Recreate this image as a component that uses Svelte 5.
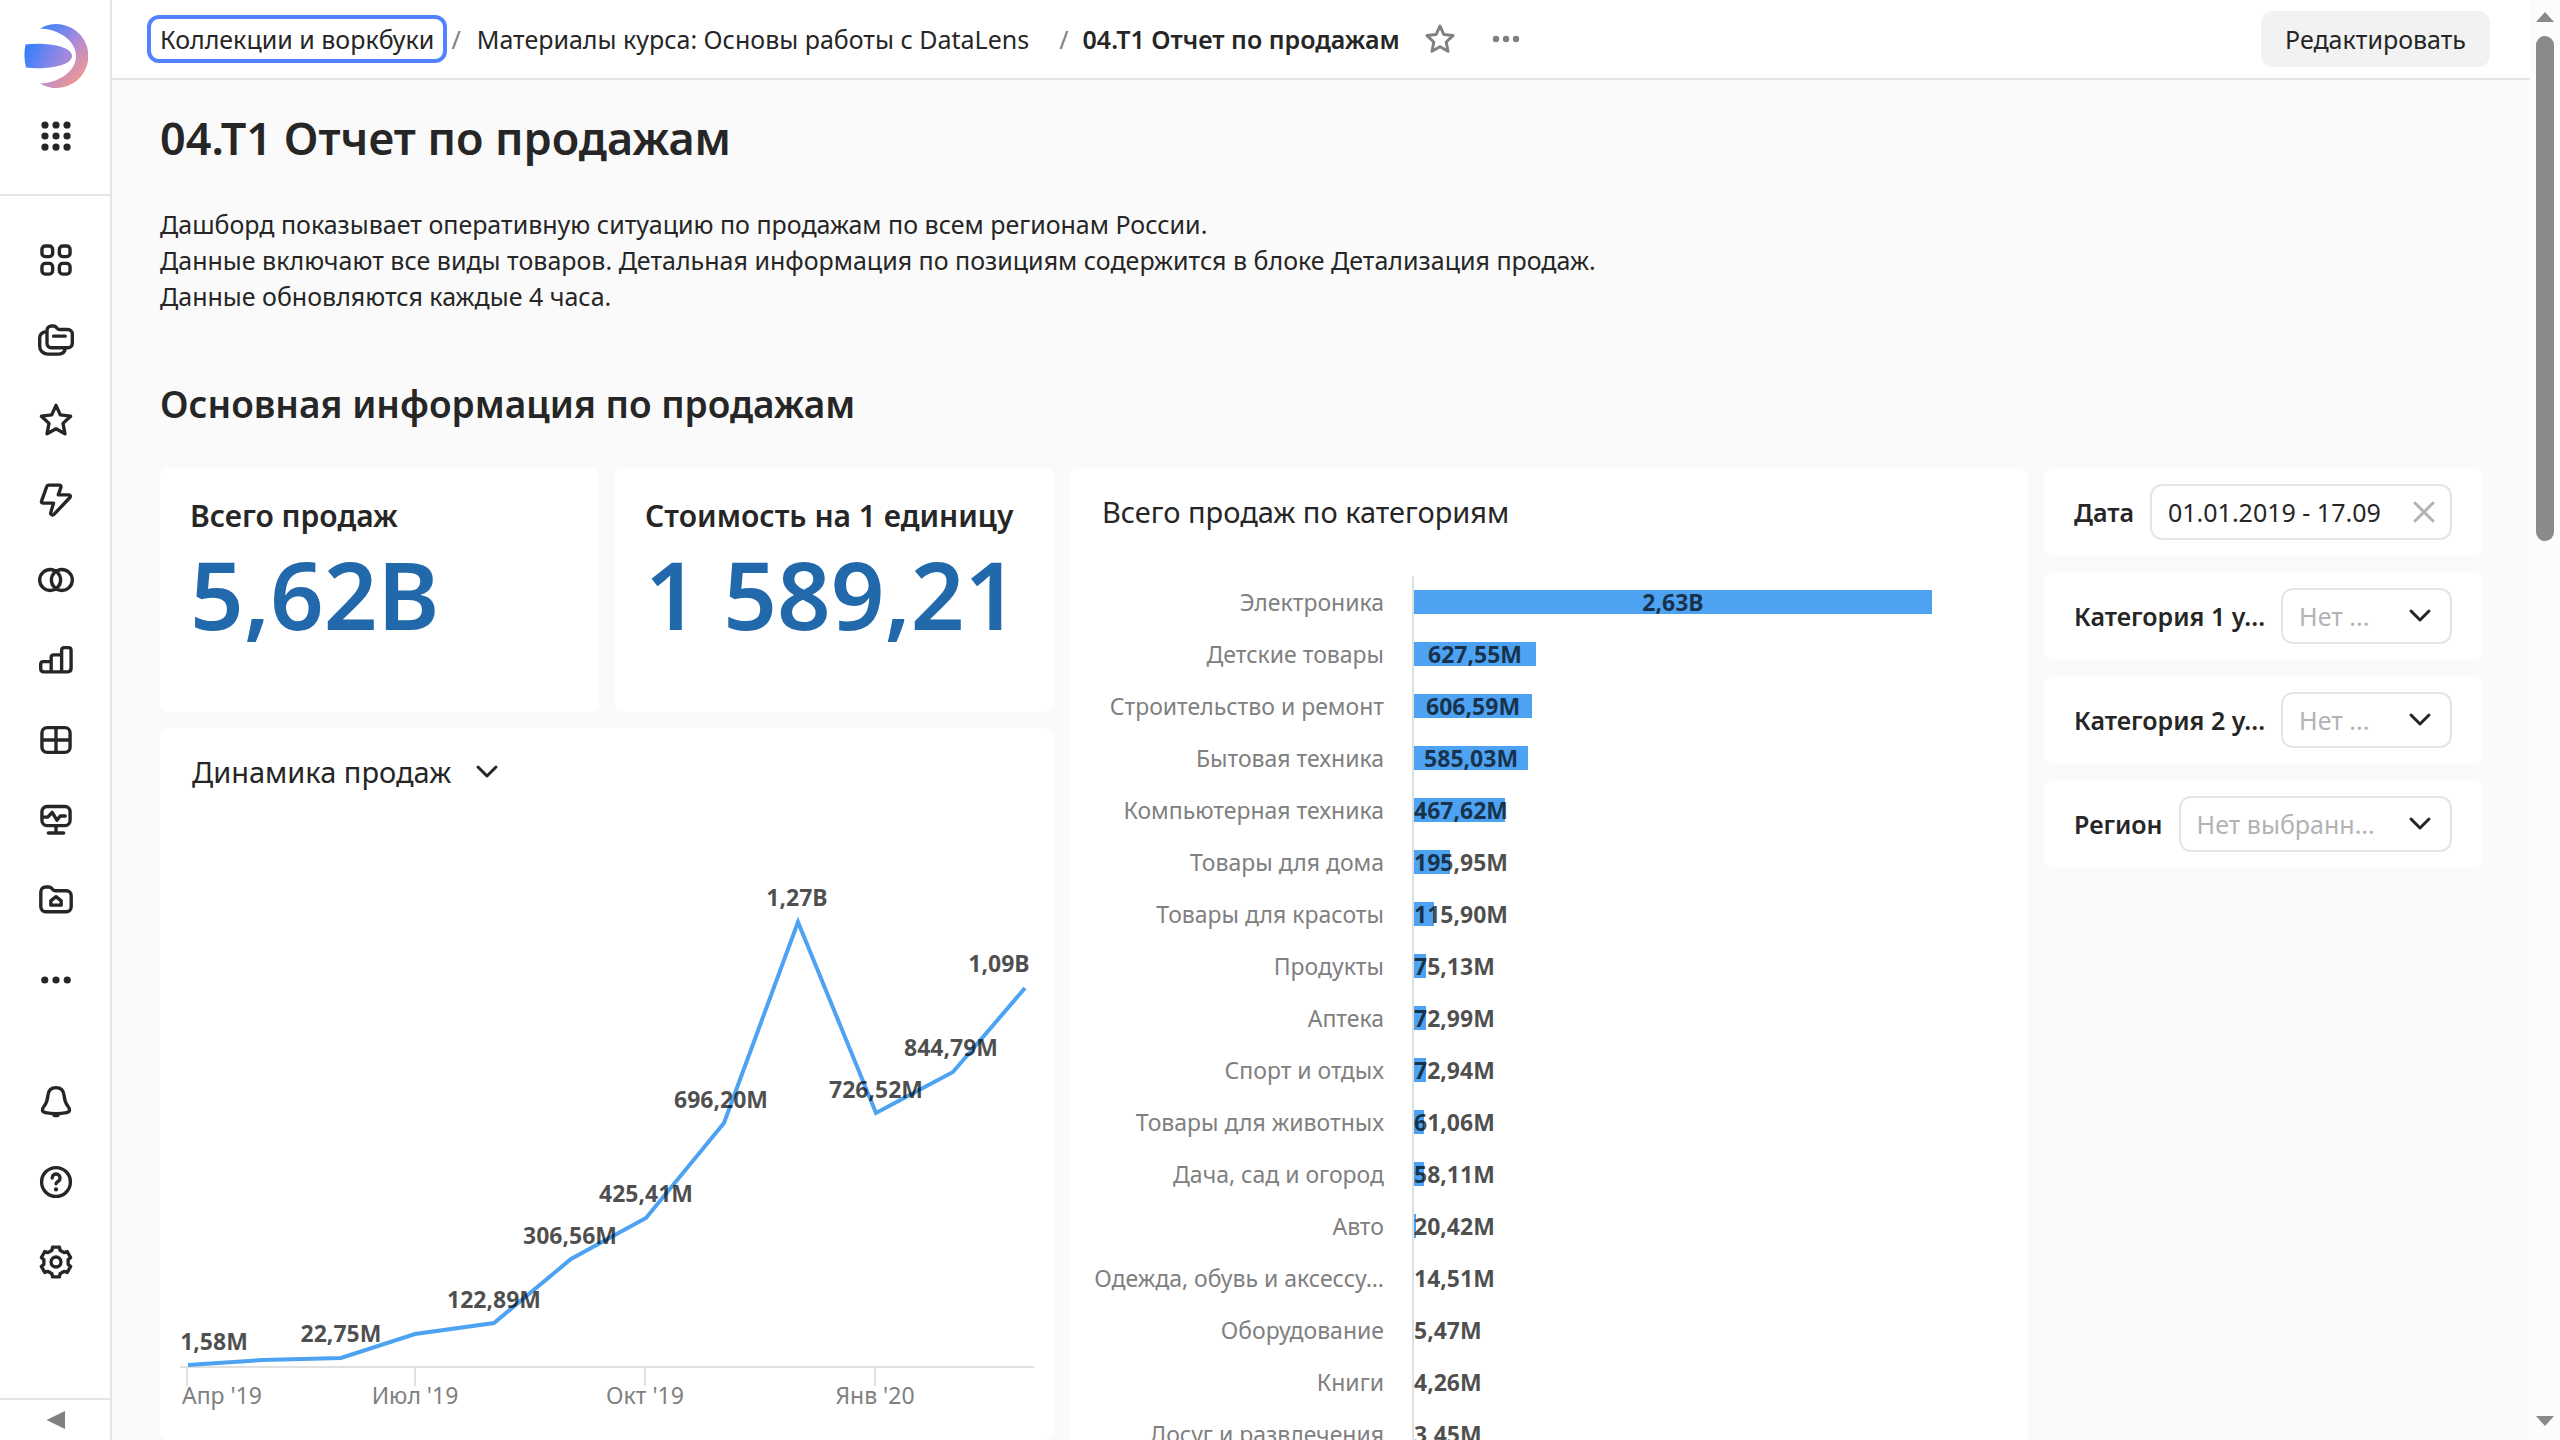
<script>
  const ring = (n, fn) => Array.from({ length: n }, (_, i) => fn(i));
  const polar = (deg, r) => {
    const a = ((deg - 90) * Math.PI) / 180;
    return `${(8 + r * Math.cos(a)).toFixed(2)} ${(8 + r * Math.sin(a)).toFixed(2)}`;
  };
  const gear =
    'M' +
    ring(6, (i) => {
      const d = i * 60;
      return [
        polar(d - 13, 6.8),
        polar(d + 13, 6.8),
        polar(d + 19, 5.5),
        polar(d + 41, 5.5),
      ].join('L');
    }).join('L') +
    'Z';

  const star =
    'M8 1.5 9.9 5.7 14.5 6.3 11.1 9.5 12 14.1 8 11.9 4 14.1 4.9 9.5 1.5 6.3 6.1 5.7Z';

  const nav = [
    { name: 'Дашборды', d: 'M3.25 1.75h1.75a1.5 1.5 0 0 1 1.5 1.5v1.75a1.5 1.5 0 0 1-1.5 1.5h-1.75a1.5 1.5 0 0 1-1.5-1.5v-1.75a1.5 1.5 0 0 1 1.5-1.5zM11 1.75h1.75a1.5 1.5 0 0 1 1.5 1.5v1.75a1.5 1.5 0 0 1-1.5 1.5H11a1.5 1.5 0 0 1-1.5-1.5v-1.75a1.5 1.5 0 0 1 1.5-1.5zM3.25 9.5h1.75a1.5 1.5 0 0 1 1.5 1.5v1.75a1.5 1.5 0 0 1-1.5 1.5h-1.75a1.5 1.5 0 0 1-1.5-1.5v-1.75a1.5 1.5 0 0 1 1.5-1.5zM11 9.5h1.75a1.5 1.5 0 0 1 1.5 1.5v1.75a1.5 1.5 0 0 1-1.5 1.5H11a1.5 1.5 0 0 1-1.5-1.5v-1.75a1.5 1.5 0 0 1 1.5-1.5z' },
    { name: 'Коллекции', d: 'M4 3.75a2 2 0 0 1 2-2h.9c.5 0 1 .25 1.3.65l.25.35c.3.4.75.6 1.25.6h3.55a2 2 0 0 1 2 2v4.1a2 2 0 0 1-2 2H6a2 2 0 0 1-2-2zM6.9 6.3h5.2M3.8 4.3C1.9 4.5.75 5.5.75 7.25v3.5a3.5 3.5 0 0 0 3.5 3.5h5c1.6 0 2.6-.9 2.9-2.4' },
    { name: 'Избранное', d: star },
    { name: 'Подключения', d: 'M4.7 1.4h4.8a.7.7 0 0 1 .7.9L9 5.7h4.7c.7 0 .9.7.5 1.2L7.2 14.3c-.7.7-1.8.2-1.5-.8L6.9 9.4H2.3c-.6 0-.9-.5-.7-1L3.9 2c.1-.4.4-.6.8-.6z' },
    { name: 'Датасеты', d: 'M.75 8a4.65 4.65 0 1 0 9.3 0a4.65 4.65 0 1 0-9.3 0zM5.95 8a4.65 4.65 0 1 0 9.3 0a4.65 4.65 0 1 0-9.3 0z' },
    { name: 'Чарты', d: 'M10.5 13.25V3.7c0-.7.5-1.2 1.2-1.2h1.8c.7 0 1.2.5 1.2 1.2v8c0 .9-.6 1.55-1.5 1.55H2.7c-.9 0-1.5-.6-1.5-1.5V9.9c0-.7.5-1.2 1.2-1.2h3.2M5.85 13.25V6.9c0-.7.5-1.2 1.2-1.2h3.2' },
    { name: 'Таблицы', d: 'M4 2.5h8a2.25 2.25 0 0 1 2.25 2.25v6.5A2.25 2.25 0 0 1 12 13.5H4a2.25 2.25 0 0 1-2.25-2.25v-6.5A2.25 2.25 0 0 1 4 2.5zM8 2.5v11M1.75 8h12.5' },
    { name: 'Мониторинг', d: 'M4 2h8a2.25 2.25 0 0 1 2.25 2.25v4A2.25 2.25 0 0 1 12 10.5H4a2.25 2.25 0 0 1-2.25-2.25v-4A2.25 2.25 0 0 1 4 2zM8 10.5v3.3M4.6 13.8h6.8M1.9 6.7h2.4l2-2.1 2.1 3.5 1.5-1.9h2.2' },
    { name: 'Моя папка', d: 'M1.25 4.4c0-1.3.9-2.2 2.2-2.2h1.2c.6 0 1.2.3 1.6.8l.3.3c.3.4.7.6 1.2.6h4.8c1.3 0 2.2.9 2.2 2.2v4.9c0 1.3-.9 2.2-2.2 2.2h-9.1c-1.3 0-2.2-.9-2.2-2.2zM5.7 8.4 8 6.5l2.3 1.9v1.9H5.7z' },
  ];

  const apps = ring(9, (i) => ({ x: 3.1 + (i % 3) * 4.9, y: 3.1 + Math.floor(i / 3) * 4.9 }));

  const series = [
    [28, 545], [103, 540], [181, 538], [255, 514], [334, 503], [411, 439],
    [486, 398], [564, 303], [638, 102], [716, 293], [793, 252], [865, 168],
  ];
  const line = series.map((p) => p.join(',')).join(' ');
  const marks = [
    { x: 54, y: 530, t: '1,58M' }, { x: 181, y: 522, t: '22,75M' },
    { x: 334, y: 488, t: '122,89M' }, { x: 410, y: 424, t: '306,56M' },
    { x: 486, y: 382, t: '425,41M' }, { x: 561, y: 288, t: '696,20M' },
    { x: 637, y: 86, t: '1,27B' }, { x: 716, y: 278, t: '726,52M' },
    { x: 791, y: 236, t: '844,79M' }, { x: 839, y: 152, t: '1,09B' },
  ];
  const ticks = [
    { x: 27, tx: 62, t: "Апр '19" }, { x: 255, tx: 255, t: "Июл '19" },
    { x: 485, tx: 485, t: "Окт '19" }, { x: 715, tx: 715, t: "Янв '20" },
  ];

  const top = 2630;
  const bars = [
    ['Электроника', '2,63B', 2630], ['Детские товары', '627,55M', 620],
    ['Строительство и ремонт', '606,59M', 600], ['Бытовая техника', '585,03M', 580],
    ['Компьютерная техника', '467,62M', 460], ['Товары для дома', '195,95M', 184],
    ['Товары для красоты', '115,90M', 102], ['Продукты', '75,13M', 60],
    ['Аптека', '72,99M', 60], ['Спорт и отдых', '72,94M', 60],
    ['Товары для животных', '61,06M', 51], ['Дача, сад и огород', '58,11M', 51],
    ['Авто', '20,42M', 10], ['Одежда, обувь и аксессу…', '14,51M', 0],
    ['Оборудование', '5,47M', 0], ['Книги', '4,26M', 0],
    ['Досуг и развлечения', '3,45M', 0],
  ];

  const filters = [
    { id: 'cat1', label: 'Категория 1 у...', value: 'Нет ...' },
    { id: 'cat2', label: 'Категория 2 у...', value: 'Нет ...' },
    { id: 'region', label: 'Регион', value: 'Нет выбранн...' },
  ];
</script>

{#snippet icon(d)}
  <svg class="icon" viewBox="0 0 16 16" aria-hidden="true"><path {d} /></svg>
{/snippet}

{#snippet dots()}
  <svg class="icon dots" viewBox="0 0 16 16" aria-hidden="true">
    <circle cx="3" cy="8" r="1.6" /><circle cx="8" cy="8" r="1.6" /><circle cx="13" cy="8" r="1.6" />
  </svg>
{/snippet}

<div class="app">
  <aside class="side">
    <div class="brand">
      <a href="#home" aria-label="DataLens">
        <svg class="logo" viewBox="24 24 64 64" aria-hidden="true">
          <defs>
            <linearGradient id="brand" gradientUnits="userSpaceOnUse" x1="30" y1="32" x2="82" y2="82">
              <stop offset="0" stop-color="#3d82f7" />
              <stop offset="0.25" stop-color="#5f85f0" />
              <stop offset="0.55" stop-color="#b08ad6" />
              <stop offset="1" stop-color="#f69a88" />
            </linearGradient>
            <linearGradient id="beam" gradientUnits="userSpaceOnUse" x1="26" y1="46" x2="72" y2="66">
              <stop offset="0" stop-color="#2f80fb" />
              <stop offset="0.5" stop-color="#7a84ec" />
              <stop offset="1" stop-color="#b98bd2" />
            </linearGradient>
          </defs>
          <path fill="url(#brand)" d="M40 28.5A32 32 0 1 1 40 83.500C60 82.500 76 71 76 56S60 29.500 40 28.500z" />
          <path fill="url(#beam)" d="M25.500 44.500C45 42 72 46 72 56S45 70 26 67.500C24 60 24 52 25.500 44.500z" />
        </svg>
      </a>
      <button class="navbtn" aria-label="Сервисы">
        <svg class="icon dots" viewBox="0 0 16 16" aria-hidden="true">
          {#each apps as a}<circle cx={a.x} cy={a.y} r="1.6" />{/each}
        </svg>
      </button>
    </div>
    <nav>
      {#each nav as n}
        <button class="navbtn" aria-label={n.name}>{@render icon(n.d)}</button>
      {/each}
      <button class="navbtn" aria-label="Ещё">{@render dots()}</button>
    </nav>
    <div class="tools">
      <button class="navbtn" aria-label="Уведомления">
        <svg class="icon" viewBox="0 0 16 16" aria-hidden="true">
          <path d="M8 1.6C5.7 1.6 4.6 3.2 4.4 5.1 4.2 7 3.9 8.4 2.7 9.9 1.5 11.3 1.8 12.4 3.3 12.7c3 .6 6.4 .6 9.4 0 1.5-.3 1.8-1.4 .6-2.8C12.1 8.4 11.8 7 11.6 5.1 11.4 3.2 10.3 1.6 8 1.6z" />
          <path class="solid" d="M6.2 13.3h3.6a1.8 1.5 0 0 1-3.6 0z" />
        </svg>
      </button>
      <button class="navbtn" aria-label="Помощь">
        <svg class="icon" viewBox="0 0 16 16" aria-hidden="true">
          <circle cx="8" cy="8" r="6.4" />
          <path d="M6.3 6.2a1.75 1.75 0 1 1 2.7 1.45c-.7.45-1 .7-1 1.15" />
          <circle class="solid" cx="8" cy="11.3" r=".95" />
        </svg>
      </button>
      <button class="navbtn" aria-label="Настройки">
        <svg class="icon" viewBox="0 0 16 16" aria-hidden="true">
          <path d={gear} /><circle cx="8" cy="8" r="2.2" />
        </svg>
      </button>
    </div>
    <button class="collapse" aria-label="Свернуть">
      <svg viewBox="0 0 20 20" aria-hidden="true"><path d="M0.5 10 19 1v18z" /></svg>
    </button>
  </aside>

  <div class="page">
    <header>
      <nav class="crumbs" aria-label="Навигация">
        <a class="focused" href="#collections">Коллекции и воркбуки</a>
        <span class="slash">/</span>
        <a href="#workbook">Материалы курса: Основы работы с DataLens</a>
        <span class="slash wide">/</span>
        <a class="current" href="#report" aria-current="page">04.T1 Отчет по продажам</a>
      </nav>
      <button class="tool" aria-label="В избранное">{@render icon(star)}</button>
      <button class="tool" aria-label="Меню">{@render dots()}</button>
      <button class="edit">Редактировать</button>
    </header>

    <main>
      <h1>04.T1 Отчет по продажам</h1>
      <p>
        Дашборд показывает оперативную ситуацию по продажам по всем регионам России.<br />
        Данные включают все виды товаров. Детальная информация по позициям содержится в блоке Детализация продаж.<br />
        Данные обновляются каждые 4 часа.
      </p>
      <h2>Основная информация по продажам</h2>

      <div class="board">
        <div class="left">
          <section class="card kpi"><h3>Всего продаж</h3><strong>5,62B</strong></section>
          <section class="card kpi"><h3>Стоимость на 1 единицу</h3><strong>1 589,21</strong></section>
          <section class="card trend">
            <button class="pick">
              Динамика продаж
              <svg class="chev" viewBox="0 0 24 24" aria-hidden="true"><path d="M3 7l9 9 9-9" /></svg>
            </button>
            <svg class="plot" viewBox="0 0 894 600" role="img" aria-label="Динамика продаж">
              <path class="axis" d="M20 547H874" />
              {#each ticks as k}
                <path class="axis" d="M{k.x} 547v19" />
                <text class="tick" x={k.tx} y="584">{k.t}</text>
              {/each}
              <polyline points={line} />
              {#each marks as m}<text class="mark" x={m.x} y={m.y}>{m.t}</text>{/each}
            </svg>
          </section>
        </div>

        <section class="card cats">
          <h3>Всего продаж по категориям</h3>
          <div class="rows">
            {#each bars as [name, text, v]}
              <div class="row">
                <span class="name">{name}</span>
                <div class="track">
                  <div class="bar" style:width="{(v / top) * 100}%"><span>{text}</span></div>
                </div>
              </div>
            {/each}
          </div>
        </section>

        <div class="filters">
          <div class="card filter">
            <label for="date">Дата</label>
            <div class="field date">
              <input id="date" type="text" value="01.01.2019 - 17.09" />
              <button class="clear" aria-label="Очистить">
                <svg class="chev" viewBox="0 0 24 24" aria-hidden="true"><path d="M3 3l18 18M21 3 3 21" /></svg>
              </button>
            </div>
          </div>
          {#each filters as f}
            <div class="card filter">
              <label for={f.id}>{f.label}</label>
              <div class="field">
                <select id={f.id}><option>{f.value}</option></select>
                <svg class="chev" viewBox="0 0 24 24" aria-hidden="true"><path d="M3 7l9 9 9-9" /></svg>
              </div>
            </div>
          {/each}
        </div>
      </div>
    </main>
  </div>

  <div class="scroll" aria-hidden="true">
    <svg viewBox="0 0 18 10"><path d="M0 10 9 0l9 10z" /></svg>
    <div class="rail"><div class="thumb"></div></div>
    <svg viewBox="0 0 18 10"><path d="M0 0l9 10 9-10z" /></svg>
  </div>
</div>

<style>
  :global(body) { margin: 0; }
  .app {
    display: grid;
    grid-template-columns: 112px minmax(0, 1fr) 30px;
    height: 100vh;
    overflow: hidden;
    background: #fafafa;
    color: #262626;
    font: 25px/36px "Noto Sans", "Open Sans", sans-serif;
  }
  .app * { box-sizing: border-box; }
  button { font: inherit; color: inherit; background: none; border: 0; padding: 0; margin: 0; cursor: pointer; }
  a { color: inherit; text-decoration: none; }
  h1, h2, h3, p { margin: 0; }
  h1, h2, h3 { font-weight: 600; }

  .side { display: flex; flex-direction: column; background: #fff; box-shadow: inset -2px 0 #e5e5e5; min-height: 0; }
  .brand { display: flex; flex-direction: column; align-items: center; height: 196px; padding-top: 24px; border-bottom: 2px solid #e5e5e5; }
  .brand a { height: 64px; }
  .logo { width: 64px; height: 64px; display: block; }
  .brand .navbtn { height: 96px; }
  .side nav { padding-top: 24px; }
  .navbtn { display: flex; align-items: center; justify-content: center; width: 100%; height: 80px; flex: none; }
  .icon { width: 36px; height: 36px; fill: none; stroke: currentColor; stroke-width: 1.5; stroke-linecap: round; stroke-linejoin: round; }
  .dots { fill: currentColor; stroke: none; }
  .solid { fill: currentColor; stroke: none; }
  .tools { margin-top: auto; padding-bottom: 96px; }
  .collapse { display: flex; justify-content: center; align-items: center; height: 42px; border-top: 2px solid #e5e5e5; color: #808080; }
  .collapse svg { width: 20px; height: 20px; fill: currentColor; }

  .page { display: flex; flex-direction: column; min-width: 0; min-height: 0; }
  header { display: flex; align-items: center; flex: none; height: 80px; padding: 0 40px 0 35px; background: #fff; border-bottom: 2px solid #e5e5e5; }
  .crumbs { display: flex; align-items: center; white-space: nowrap; }
  .focused { padding: 2px 9px; border: 4px solid #5282ff; border-radius: 12px; }
  .slash { color: #808080; padding: 0 16px 0 4px; }
  .slash.wide { padding: 0 14px 0 30px; }
  .current { font-weight: 600; }
  .tool { display: flex; margin-left: 24px; color: #808080; }
  .tool .icon { width: 32px; height: 32px; }
  .tool + .tool { margin-left: 34px; }
  .edit { margin-left: auto; height: 56px; padding: 0 24px; border-radius: 12px; background: #f2f2f2; }

  main { padding: 26px 48px 0; min-height: 0; overflow: hidden; }
  h1 { font-size: 45px; line-height: 64px; }
  main p { padding-top: 36px; }
  h2 { font-size: 37px; line-height: 48px; padding: 66px 0 40px; }

  .board { display: grid; grid-template-columns: minmax(0, 894fr) minmax(0, 958fr) minmax(0, 438fr); gap: 16px; align-items: start; }
  .left { display: grid; grid-template-columns: repeat(2, minmax(0, 1fr)); gap: 16px; }
  .card { background: #fff; border-radius: 8px; }
  .kpi { min-height: 244px; padding: 28px 30px; white-space: nowrap; }
  .kpi h3 { font-size: 30px; line-height: 40px; }
  .kpi strong { display: block; font-size: 94px; line-height: 116px; font-weight: 600; color: #2169ab; }
  .trend { grid-column: span 2; padding-bottom: 20px; }
  .pick { display: flex; align-items: center; gap: 24px; height: 92px; padding: 0 32px 4px; font-size: 29px; }
  .chev { width: 24px; height: 24px; flex: none; fill: none; stroke: currentColor; stroke-width: 3; stroke-linecap: round; stroke-linejoin: round; }
  .plot { display: block; width: 100%; }
  .axis { stroke: #e0e0e0; stroke-width: 2; }
  .plot polyline { fill: none; stroke: #4da2f1; stroke-width: 4; }
  .plot text { font-size: 23px; text-anchor: middle; }
  .tick { fill: #808080; }
  .mark { fill: rgb(0 0 0 / 0.7); font-weight: 700; }

  .cats { padding: 24px 20px 32px; }
  .cats h3 { font-size: 29px; line-height: 40px; font-weight: 400; padding: 0 12px 44px; }
  .rows { display: grid; font-size: 23px; }
  .row { display: grid; grid-template-columns: 294px minmax(0, 1fr); gap: 28px; height: 52px; }
  .name { align-self: center; text-align: right; color: #808080; white-space: nowrap; }
  .track { display: flex; align-items: center; border-left: 2px solid #e0e0e0; padding-right: 76px; }
  .bar { height: 24px; background: #4da2f1; line-height: 24px; white-space: nowrap; }
  .bar span { display: block; width: max-content; min-width: 100%; text-align: center; font-weight: 700; color: rgb(0 0 0 / 0.7); }

  .filters { display: grid; gap: 16px; }
  .filter { display: flex; align-items: center; gap: 16px; height: 88px; padding: 0 30px; }
  .filter label { flex: none; max-width: 51%; overflow: hidden; white-space: nowrap; font-weight: 600; }
  .field { display: flex; align-items: center; flex: 1; min-width: 0; height: 56px; padding: 0 18px 0 16px; border: 2px solid #e5e5e5; border-radius: 12px; }
  .field.date { padding-right: 14px; }
  .field input, .field select { flex: 1; min-width: 0; width: 0; height: 36px; padding: 0; border: 0; outline: 0; background: none; font: inherit; color: inherit; appearance: none; }
  .field select { color: #b3b3b3; }
  .clear { display: flex; color: #b3b3b3; }

  .scroll { display: flex; flex-direction: column; align-items: center; padding: 12px 0 14px; gap: 14px; background: #fcfcfc; }
  .scroll svg { width: 18px; height: 10px; fill: #8a8a8a; flex: none; }
  .rail { flex: 1; width: 18px; }
  .thumb { height: 37%; border-radius: 9px; background: #8a8a8a; }
</style>
